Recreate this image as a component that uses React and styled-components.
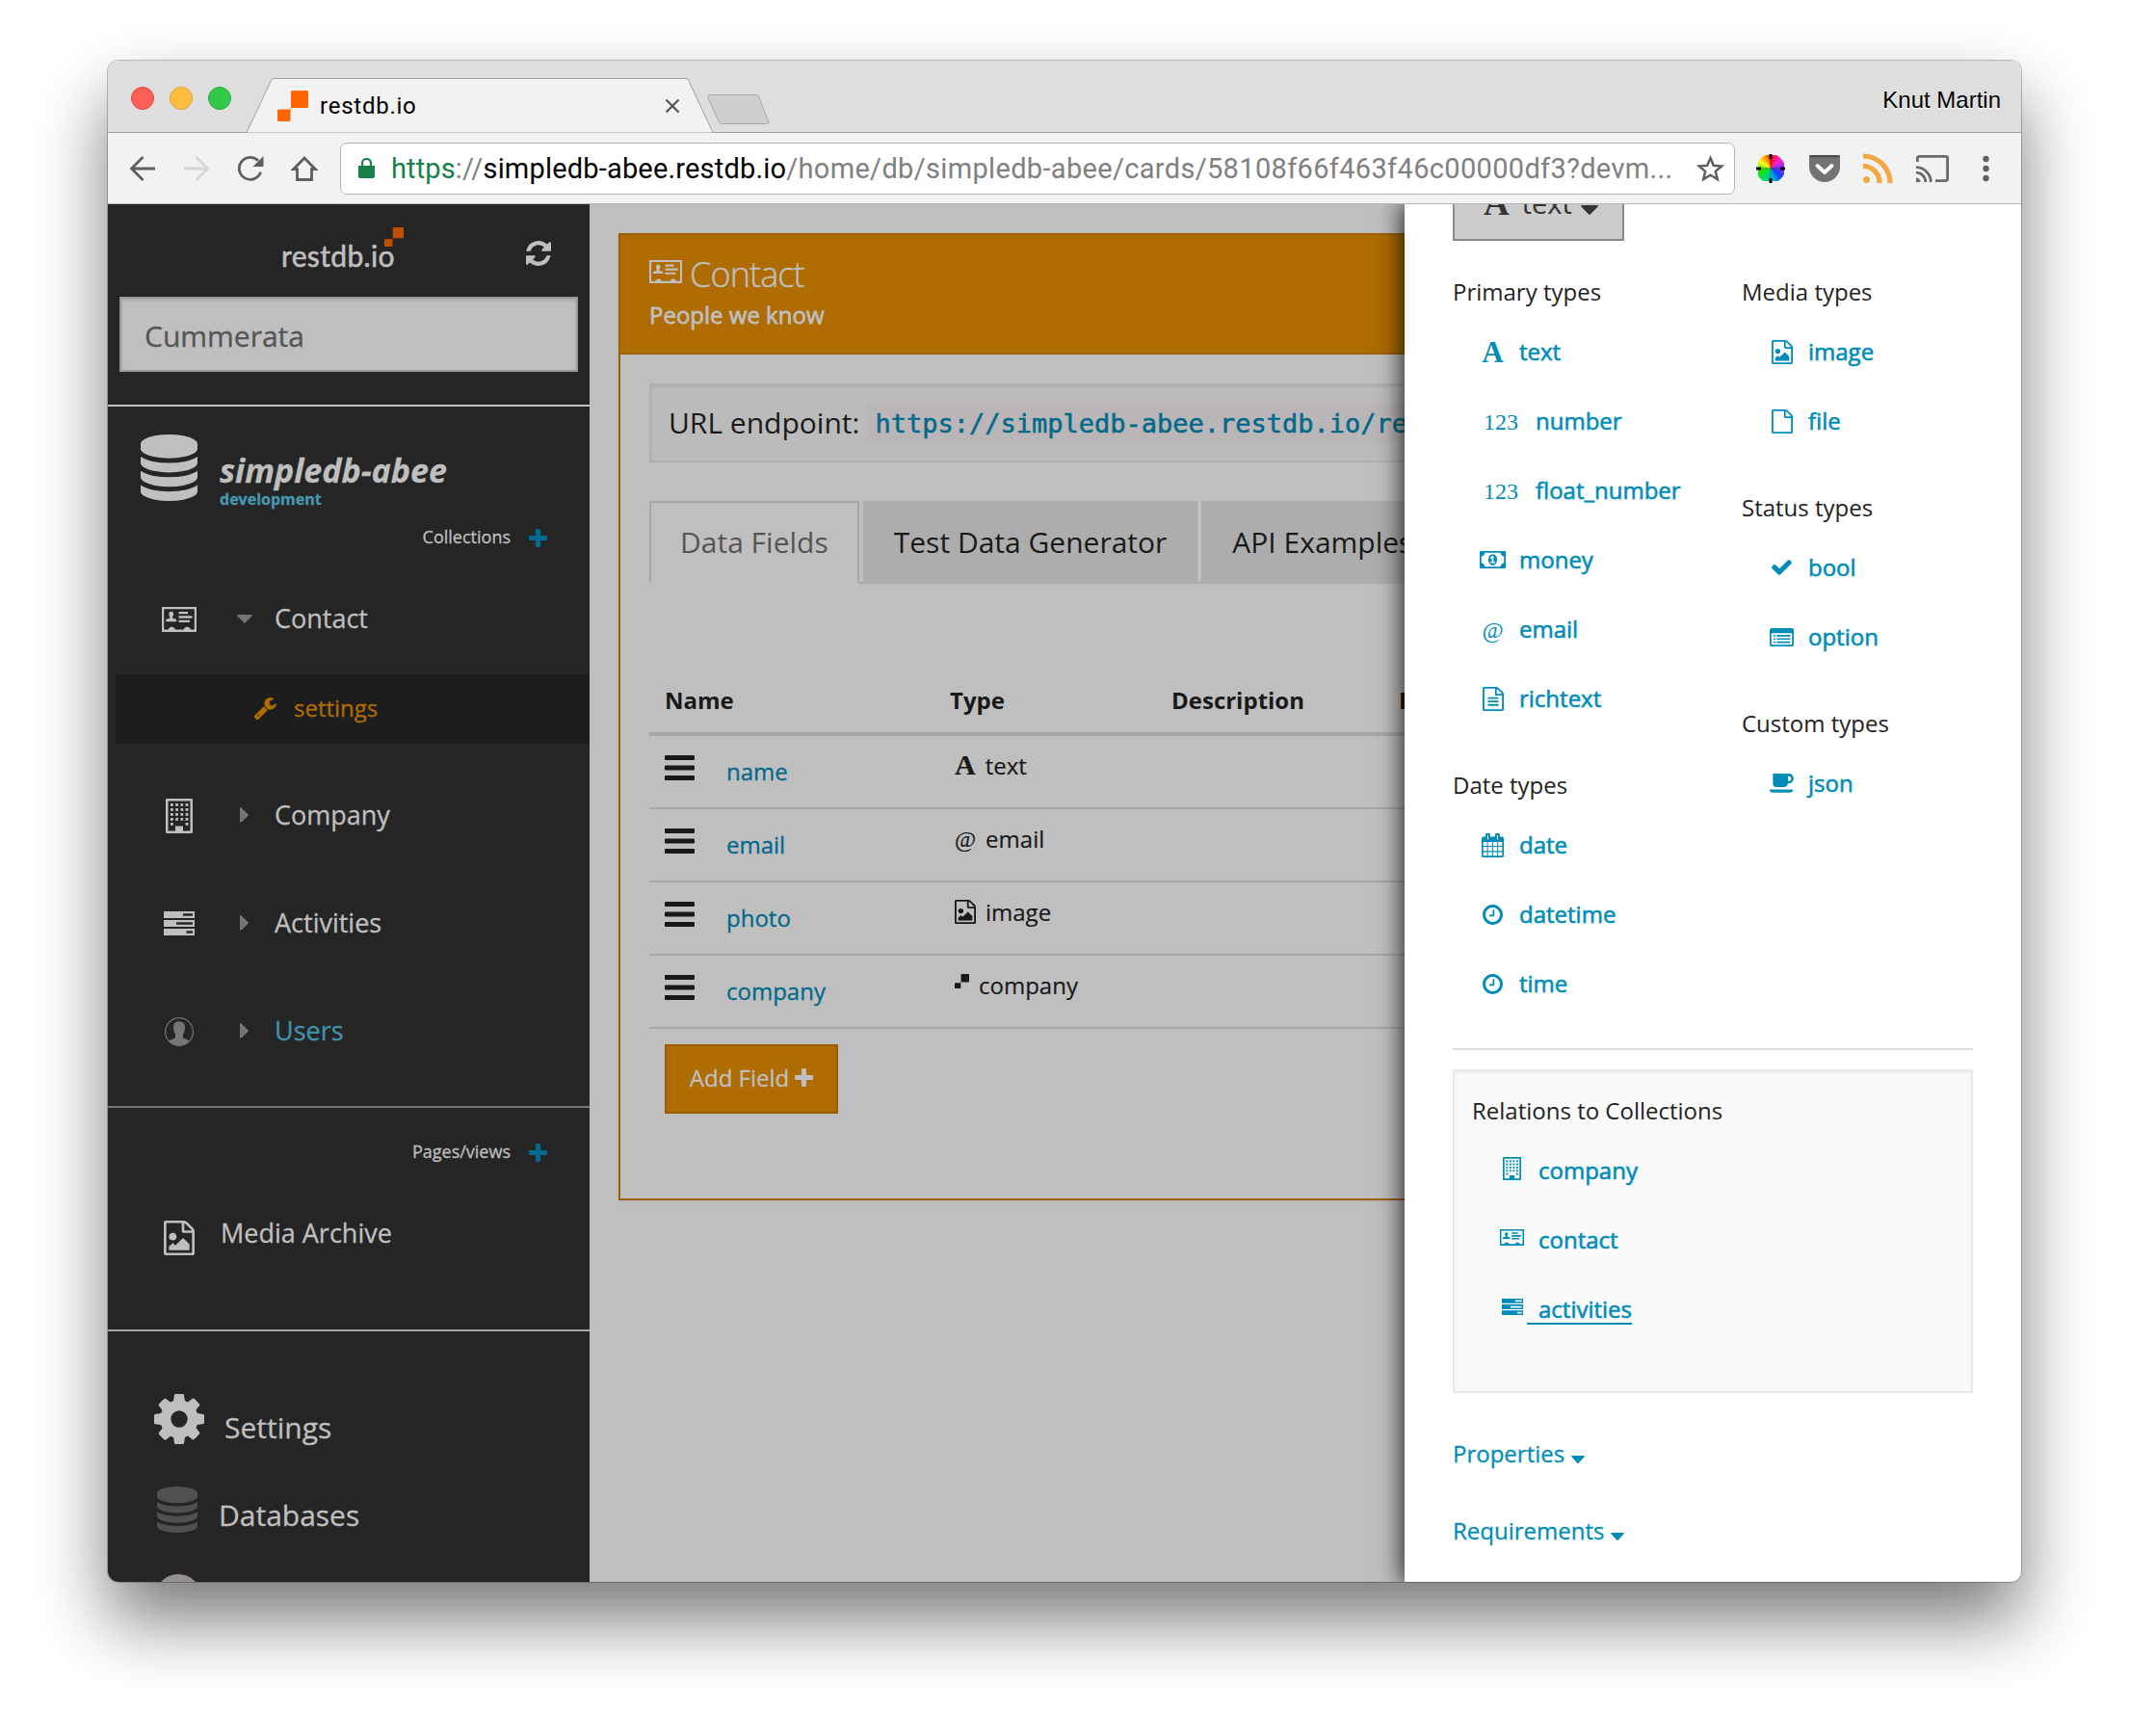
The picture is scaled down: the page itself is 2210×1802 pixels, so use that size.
import styled, { createGlobalStyle, css } from "styled-components";

const LINK = "#008cba";
const LINK_DIM = "#00698c";
const DIM = "#bfbfbf";
const ORANGE = "#ae6c02";
const ORANGE_DARK = "#9c6002";

const GlobalStyle = createGlobalStyle`
  * {
    box-sizing: border-box;
  }

  body {
    margin: 0;
    background-color: #fff;
    font-family: "Open Sans", sans-serif;
    color: #222;
  }

  p, h1, h2, h3, h4, ul, table {
    margin: 0;
    padding: 0;
    font-weight: 400;
  }

  a {
    text-decoration: none;
    color: inherit;
  }
`;

/* ---------- icons ---------- */

const FILE_PATH =
  "M1596 380q28 28 48 76t20 88v1152q0 40-28 68t-68 28H224q-40 0-68-28t-28-68V96q0-40 28-68T224 0h896q40 0 88 20t76 48zm-444-244v376h376q-10-29-22-41l-313-313q-12-12-41-22zm384 1528V640h-416q-40 0-68-28t-28-68V128H256v1536h1280z";

const icons = {
  file: { box: "128 0 1536 1792", body: <path d={FILE_PATH} /> },
  image: {
    box: "128 0 1536 1792",
    body: (
      <>
        <path d={FILE_PATH} />
        <path d="M1408 1216v320H384v-192l192-192 128 128 384-384zM576 1024q-80 0-136-56t-56-136 56-136 136-56 136 56 56 136-56 136-136 56z" />
      </>
    ),
  },
  richtext: {
    box: "128 0 1536 1792",
    body: (
      <>
        <path d={FILE_PATH} />
        <rect x="512" y="768" width="768" height="128" rx="32" />
        <rect x="512" y="1024" width="768" height="128" rx="32" />
        <rect x="512" y="1280" width="768" height="128" rx="32" />
      </>
    ),
  },
  database: {
    box: "128 0 1536 1792",
    body: (
      <path d="M896 768q237 0 443-43t325-127v170q0 69-103 128t-280 93.5-385 34.5-385-34.5T231 896 128 768V598q119 84 325 127t443 43zm0 768q237 0 443-43t325-127v170q0 69-103 128t-280 93.5-385 34.5-385-34.5-280-93.5-103-128v-170q119 84 325 127t443 43zm0-384q237 0 443-43t325-127v170q0 69-103 128t-280 93.5-385 34.5-385-34.5-280-93.5-103-128V982q119 84 325 127t443 43zM896 0q208 0 385 34.5t280 93.5 103 128v128q0 69-103 128t-280 93.5T896 640t-385-34.5T231 512 128 384V256q0-69 103-128t280-93.5T896 0z" />
    ),
  },
  plus: {
    box: "192 128 1408 1408",
    body: (
      <path d="M1600 736v192q0 40-28 68t-68 28h-416v416q0 40-28 68t-68 28h-192q-40 0-68-28t-28-68v-416h-416q-40 0-68-28t-28-68v-192q0-40 28-68t68-28h416v-416q0-40 28-68t68-28h192q40 0 68 28t28 68v416h416q40 0 68 28t28 68z" />
    ),
  },
  wrench: {
    box: "85 128 1641 1643",
    body: (
      <path d="M448 1472q0-26-19-45t-45-19-45 19-19 45 19 45 45 19 45-19 19-45zm644-420l-682 682q-37 37-90 37-52 0-91-37L123 1627q-38-36-38-90 0-53 38-91l681-681q39 98 114.5 173.5T1092 1052zm634-435q0 39-23 106-47 134-164.5 217.5T1280 1024q-185 0-316.5-131.5T832 576t131.5-316.5T1280 128q58 0 121.5 16.5T1509 191q16 11 16 28t-16 28l-293 169v224l193 107q5-3 79-48.5t135.5-81T1694 582q15 0 23.5 10t8.5 25z" />
    ),
  },
  cog: {
    box: "128 128 1536 1536",
    body: (
      <path d="M1152 896q0-106-75-181t-181-75-181 75-75 181 75 181 181 75 181-75 75-181zm512-109v222q0 12-8 23t-20 13l-185 28q-19 54-39 91 35 50 107 138 10 12 10 25t-9 23q-27 37-99 108t-94 71q-12 0-26-9l-138-108q-44 23-91 38-16 136-29 186-7 28-36 28H785q-14 0-24.5-8.5T749 1642l-28-184q-49-16-90-37l-141 107q-10 9-25 9-14 0-25-11-126-114-165-168-7-10-7-23 0-12 8-23 15-21 51-66.5t54-70.5q-27-50-41-99l-183-27q-13-2-21-12.5t-8-23.5V785q0-12 8-23t19-13l186-28q14-46 39-92-40-57-107-138-10-12-10-24 0-10 9-23 26-36 98.5-107.5T465 263q13 0 26 10l138 107q44-23 91-38 16-136 29-186 7-28 36-28h222q14 0 24.5 8.5T1043 156l28 184q49 16 90 37l142-107q9-9 24-9 13 0 25 10 129 119 165 170 7 8 7 22 0 12-8 23-15 21-51 66.5t-54 70.5q26 50 41 98l183 28q13 2 21 12.5t8 23.5z" />
    ),
  },
  refresh: {
    box: "128 128 1536 1536",
    body: (
      <path d="M1639 1056q0 5-1 7-64 268-268 434.5T892 1664q-146 0-282.5-55T366 1452l-129 129q-19 19-45 19t-45-19-19-45v-448q0-26 19-45t45-19h448q26 0 45 19t19 45-19 45l-137 137q71 66 161 102t187 36q134 0 250-65t186-179q11-17 53-117 8-23 30-23h192q13 0 22.5 9.5t9.5 22.5zm25-800v448q0 26-19 45t-45 19h-448q-26 0-45-19t-19-45 19-45l138-138Q1097 384 896 384q-134 0-250 65T460 628q-11 17-53 117-8 23-30 23H178q-13 0-22.5-9.5T146 736v-7q65-268 270-434.5T896 128q146 0 284 55.5T1425 340l130-129q19-19 45-19t45 19 19 45z" />
    ),
  },
  money: {
    box: "0 256 1920 1280",
    body: (
      <path d="M768 1152h384v-96h-128V608H910L762 745l77 80q42-37 55-57h2v288H768v96zm512-256q0 70-21 142t-59.5 134-101.5 101-138 39-138-39-101.5-101-59.5-134-21-142 21-142 59.5-134T822 519t138-39 138 39 101.5 101 59.5 134 21 142zm512 256V640q-106 0-181-75t-75-181H384q0 106-75 181t-181 75v512q106 0 181 75t75 181h1152q0-106 75-181t181-75zm128-832v1152q0 26-19 45t-45 19H64q-26 0-45-19t-19-45V320q0-26 19-45t45-19h1792q26 0 45 19t19 45z" />
    ),
  },
  check: {
    box: "121 334 1550 1188",
    body: (
      <path d="M1671 566q0 40-28 68l-724 724-136 136q-28 28-68 28t-68-28l-136-136-362-362q-28-28-28-68t28-68l136-136q28-28 68-28t68 28l294 295 656-657q28-28 68-28t68 28l136 136q28 28 28 68z" />
    ),
  },
  clock: {
    box: "128 128 1536 1536",
    body: (
      <path d="M1024 544v448q0 14-9 23t-23 9H672q-14 0-23-9t-9-23v-64q0-14 9-23t23-9h224V544q0-14 9-23t23-9h64q14 0 23 9t9 23zm416 352q0-148-73-273t-198-198-273-73-273 73-198 198-73 273 73 273 198 198 273 73 273-73 198-198 73-273zm224 0q0 209-103 385.5T1281.5 1561 896 1664t-385.5-103T231 1281.5 128 896t103-385.5T510.5 231 896 128t385.5 103T1561 510.5 1664 896z" />
    ),
  },
  card: {
    box: "0 0 36 26",
    body: (
      <>
        <path
          fillRule="evenodd"
          d="M0 0h36v26H0zM2.200 2.200v21.300h4.600a3.600 3.600 0 0 1 7 0h9a3.600 3.600 0 0 1 7 0h4V2.200z"
        />
        <path d="M9.700 4.800c1.700 0 2.400 1.200 2.400 2.700 0 1.300-.7 2.300-1 2.900v1.400l3 .7c.8.300 1.200 1 1.200 2.700H4.100c0-1.700.4-2.400 1.200-2.700l3-.7v-1.400c-.3-.6-1-1.600-1-2.900 0-1.500.7-2.700 2.400-2.700z" />
        <path d="M17.500 5h9.500v2.300h-9.500zM17.500 9.300h14v2.400h-14zM17.500 13.700h11.500v2.300h-11.500z" />
      </>
    ),
  },
  building: {
    box: "0 0 28 36",
    body: (
      <>
        <path
          fillRule="evenodd"
          d="M1.200 0h25.600Q28 0 28 1.200v33.600Q28 36 26.800 36H1.200Q0 36 0 34.800V1.200Q0 0 1.200 0zM2.500 2.500v31H10V28.500h8v5h7.500v-31z"
        />
        {[5, 10, 15, 20, 25].map((y) =>
          [5, 10.2, 15.4, 20.6].map((x) =>
            y === 25 && x > 6 && x < 20 ? null : (
              <rect key={`${x}-${y}`} x={x} y={y} width="2.8" height="2.8" />
            ),
          ),
        )}
      </>
    ),
  },
  tasks: {
    box: "0 0 32 25",
    body: (
      <path
        fillRule="evenodd"
        d="M0 0h32v7H0zM20 2.300v2.500h10V2.300zM0 9h32v7H0zM13 11.300v2.500h17v-2.500zM0 18h32v7H0zM23.500 20.300v2.500H30v-2.500z"
      />
    ),
  },
  user: {
    box: "0 0 30 30",
    body: (
      <>
        <circle cx="15" cy="15" r="14.400" fill="none" stroke="currentColor" strokeWidth="1.200" />
        <path d="M15 4.200c4 0 6 2.300 6 6.300 0 3.500-1.200 5.800-2 7v3.700c1.500 1.300 5 1.500 6.800 3.300A14.600 14.600 0 0 1 15 29.500 14.600 14.600 0 0 1 4.200 24.500c1.800-1.800 5.300-2 6.800-3.300v-3.700c-.8-1.200-2-3.500-2-7 0-4 2-6.300 6-6.300z" />
      </>
    ),
  },
  list: {
    box: "0 0 24 19",
    body: (
      <>
        <path fillRule="evenodd" d="M2 0h20q2 0 2 2v15q0 2-2 2H2q-2 0-2-2V2q0-2 2-2zM1.700 5.300V16q0 1.300 1 1.300h18.600q1 0 1-1.300V5.300z" />
        <path d="M4 7h1.700v1.700H4zM7 7h13.500v1.700H7zM4 10.400h1.700v1.700H4zM7 10.400h13.500v1.700H7zM4 13.800h1.700v1.700H4zM7 13.800h13.500v1.700H7z" />
      </>
    ),
  },
  coffee: {
    box: "0 0 25 20",
    body: (
      <path
        fillRule="evenodd"
        d="M3.400 0h16.400a5 5 0 0 1 0 10.200h-1a3.500 3.500 0 0 1-3.500 3.800H6.900a3.500 3.500 0 0 1-3.500-3.500zM19 2.700v5h.8a2.500 2.500 0 0 0 0-5zM0 16.500h24.200q0 3.200-3.400 3.200H3.400Q0 19.700 0 16.500z"
      />
    ),
  },
  calendar: {
    box: "0 0 23 24",
    body: (
      <path
        fillRule="evenodd"
        d="M1.800 3.400H4V2a2 2 0 0 1 5 0v1.400h5V2a2 2 0 0 1 5 0v1.400h2.200q1.800 0 1.800 1.800v17q0 1.800-1.800 1.800H1.800Q0 24 0 22.200v-17q0-1.800 1.800-1.800zM5.900 2v4.200h1.200V2zM15.900 2v4.200h1.200V2zM1.700 8.600v3.800h3.900V8.600zM6.600 8.600v3.800h4.300V8.600zM11.900 8.600v3.800h4.300V8.600zM17.200 8.600v3.800h4.100V8.600zM1.700 13.400v4.200h3.900v-4.200zM6.600 13.400v4.200h4.300v-4.200zM11.900 13.400v4.200h4.300v-4.200zM17.200 13.400v4.200h4.100v-4.200zM1.700 18.600v3.700h3.900v-3.700zM6.600 18.600v3.700h4.300v-3.700zM11.900 18.600v3.700h4.300v-3.700zM17.200 18.600v3.700h4.100v-3.700z"
      />
    ),
  },
  bars: {
    box: "0 0 31 26",
    body: (
      <>
        <rect width="31" height="5" rx="1" />
        <rect y="10.500" width="31" height="5" rx="1" />
        <rect y="21" width="31" height="5" rx="1" />
      </>
    ),
  },
  caretDown: { box: "0 0 16 9", body: <path d="M1 0h14q1.500.4.5 1.500L8.700 8.600q-.7.600-1.400 0L.5 1.500Q-.5.400 1 0z" /> },
  caretRight: { box: "0 0 9 16", body: <path d="M0 1v14q.4 1.500 1.500.5l7.100-6.800q.6-.7 0-1.400L1.500.5Q.4-.5 0 1z" /> },
  squares: {
    box: "0 0 32 32",
    body: (
      <path d="M15.500 0h15q1.500 0 1.500 1.500v15q0 1.500-1.500 1.500H16q-1.500 0-2.500 1.200v11.300q0 1.500-1.500 1.500H1.500Q0 32 0 30.500V21q0-1.500 1.500-1.500H12q2 0 2-2v-16Q14 0 15.500 0z" />
    ),
  },
};

const Svg = styled.svg`
  display: block;
  flex: none;
  fill: currentColor;
`;

const Icon = ({ name, w, h = w, className }) => (
  <Svg
    className={className}
    viewBox={icons[name].box}
    width={w}
    height={h}
    preserveAspectRatio="none"
  >
    {icons[name].body}
  </Svg>
);

/* ---------- browser window ---------- */

const Desktop = styled.div`
  width: 2210px;
  height: 1802px;
  padding: 63px 112px 0;
  overflow: hidden;
`;

const Window = styled.div`
  width: 1986px;
  height: 1579px;
  border-radius: 11px;
  overflow: hidden;
  display: flex;
  flex-direction: column;
  background-color: #f2f2f2;
`;

const Shadow = styled.div`
  border-radius: 11px;
  box-shadow:
    0 0 0 1px rgba(0, 0, 0, 0.24),
    0 40px 74px rgba(0, 0, 0, 0.52);
`;

const TabStrip = styled.div`
  height: 75px;
  flex: none;
  display: flex;
  align-items: flex-end;
  background-color: #dedede;
  box-shadow: inset 0 -1px 0 #9f9f9f;
`;

const Lights = styled.div`
  display: flex;
  align-self: center;
  gap: 16px;
  padding: 3px 0 0 24px;
  width: 144px;
`;

const Light = styled.span`
  width: 24px;
  height: 24px;
  border-radius: 50%;
  background-color: ${({ $color }) => $color};
  border: 1px solid ${({ $edge }) => $edge};
`;

const BrowserTab = styled.div`
  position: relative;
  width: 484px;
  height: 57px;
  display: flex;
  align-items: center;
  padding: 0 34px 0 32px;
  font-family: Roboto, sans-serif;
  font-size: 24px;
  letter-spacing: 0.75px;
  color: #000;

  .shape {
    position: absolute;
    left: 0;
    top: 0;
  }

  .favicon {
    position: relative;
    color: #ff6600;
    margin-right: 12px;
  }

  p {
    position: relative;
    flex: 1;
  }

  .close {
    position: relative;
  }
`;

const NewTab = styled.svg`
  display: block;
  margin: 0 0 8px -7px;
`;

const Profile = styled.p`
  margin-left: auto;
  align-self: center;
  padding: 6px 21px 0 0;
  font-family: "Liberation Sans", sans-serif;
  font-size: 24px;
  color: #000;
  text-shadow: 0 1px 0 #fff;
`;

const Toolbar = styled.div`
  height: 74px;
  flex: none;
  display: flex;
  align-items: center;
  padding-left: 22px;
  border-bottom: 1px solid #b4b4b4;
`;

const NavButtons = styled.div`
  display: flex;
  gap: 28px;
  width: 219px;
`;

const UrlField = styled.div`
  width: 1448px;
  height: 54px;
  display: flex;
  align-items: center;
  padding: 0 10px 0 18px;
  background-color: #fff;
  border: 1px solid #b5b5b5;
  border-radius: 7px;
  font-family: Roboto, sans-serif;
  font-size: 29px;
  letter-spacing: 0.33px;
  color: #808080;
  white-space: nowrap;

  p {
    flex: 1;
    padding-left: 17px;
  }

  .secure {
    color: #188048;
    letter-spacing: 0.1px;
  }

  .host {
    color: #000;
    letter-spacing: 0.18px;
  }
`;

const Extensions = styled.div`
  display: flex;
  align-items: center;
  gap: 24px;
  padding-left: 22px;
`;

const ColorWheel = styled.span`
  width: 30px;
  height: 30px;
  margin-right: 1px;
  background: conic-gradient(
      #ff1010,
      #ff20d0 45deg,
      #7030ff 95deg,
      #1040ff 130deg,
      #00b0e0 170deg,
      #00e060 215deg,
      #20e000 255deg,
      #ffff20 300deg,
      #ff9000 335deg,
      #ff1010
    )
    center / 27px 27px no-repeat;
  border-radius: 50%;

  svg {
    display: block;
  }
`;

const BrowserChrome = () => (
  <>
    <TabStrip>
      <Lights>
        <Light $color="#ff5f57" $edge="#e0443e" />
        <Light $color="#ffbd3f" $edge="#dea034" />
        <Light $color="#34c84a" $edge="#2aad3c" />
      </Lights>
      <BrowserTab>
        <svg className="shape" width="484" height="57">
          <path d="M0 56.500L26 1.500Q26.500.5 28 .5H456Q458 .5 458.500 2L484 56.500" fill="#f2f2f2" stroke="#9f9f9f" />
        </svg>
        <Icon className="favicon" name="squares" w={32} />
        <p>restdb.io</p>
        <svg className="close" width="16" height="16" viewBox="0 0 16 16" stroke="#555" strokeWidth="2.200">
          <path d="M1.500 1.500l13 13M14.500 1.500l-13 13" />
        </svg>
      </BrowserTab>
      <NewTab width="67" height="33" viewBox="0 0 67 33">
        <path d="M4 1.500h47q3 0 4 2.500l9.500 25q.8 2.500-2 2.500H17q-3 0-4-2.500L2 4.500Q1 1.500 4 1.500z" fill="#cfcfcf" stroke="#a6a6a6" />
      </NewTab>
      <Profile>Knut Martin</Profile>
    </TabStrip>
    <Toolbar>
      <NavButtons>
        <svg width="28" height="28" viewBox="0 0 28 28" fill="none" stroke="#5f5f5f" strokeWidth="2.800">
          <path d="M27 14H3M14.500 2L2.500 14l12 12" />
        </svg>
        <svg width="28" height="28" viewBox="0 0 28 28" fill="none" stroke="#d6d6d6" strokeWidth="2.800">
          <path d="M1 14h24M13.500 2l12 12-12 12" />
        </svg>
        <svg width="28" height="28" viewBox="0 0 28 28" fill="none" stroke="#5f5f5f" strokeWidth="2.800">
          <path d="M24.600 17.800A11.500 11.500 0 1 1 22 5.700" />
          <path d="M27.500 1v11h-11z" fill="#5f5f5f" stroke="none" />
        </svg>
        <svg width="28" height="28" viewBox="0 0 28 28" fill="none" stroke="#5f5f5f" strokeWidth="2.800">
          <path d="M6.500 14.500H2.800L14 3l11.200 11.500h-3.700V25.500h-15z" />
        </svg>
      </NavButtons>
      <UrlField>
        <svg width="17" height="21" viewBox="0 0 17 21">
          <path d="M0 8h17v11q0 2-2 2H2q-2 0-2-2z" fill="#188048" />
          <path d="M4 9V5.500a4.500 4.500 0 0 1 9 0V9" fill="none" stroke="#188048" strokeWidth="2.200" />
        </svg>
        <p>
          <span className="secure">https</span>://
          <span className="host">simpledb-abee.restdb.io</span>
          /home/db/simpledb-abee/cards/58108f66f463f46c00000df3?devm...
        </p>
        <svg width="29" height="28" viewBox="0 0 29 28" fill="none" stroke="#5f5f5f" strokeWidth="2.500">
          <path d="M14.500 3l3.300 7.700 8.400.7-6.400 5.500 2 8.200-7.300-4.400-7.300 4.400 2-8.200L2.800 11.400l8.400-.7z" />
        </svg>
      </UrlField>
      <Extensions>
        <ColorWheel>
          <svg width="30" height="30" viewBox="0 0 30 30">
            <path d="M15 0v5M15 25v5M0 15h5M25 15h5" stroke="#000" strokeWidth="3" />
            <path d="M15 5v20M5 15h20" stroke="#000" strokeOpacity="0.4" strokeWidth="0.800" />
          </svg>
        </ColorWheel>
        <svg width="32" height="28" viewBox="0 0 32 28">
          <path d="M2 0h28Q32 0 32 2V12a16 16 0 0 1-32 0V2Q0 0 2 0z" fill="#737373" />
          <path d="M0 2.200Q0 0 2 0h28Q32 0 32 2.200z" fill="#4a4a4a" />
          <path d="M8.500 11l7.500 7 7.500-7" fill="none" stroke="#fff" strokeWidth="3.800" strokeLinecap="round" strokeLinejoin="round" />
        </svg>
        <svg width="31" height="31" viewBox="0 0 31 31" fill="none" stroke="#f2a941" strokeWidth="5.200">
          <circle cx="3.500" cy="27.500" r="3.500" fill="#f2a941" stroke="none" />
          <path d="M0 13.500A17 17 0 0 1 17 31M0 3A28 28 0 0 1 28 31" />
        </svg>
        <svg width="34" height="28" viewBox="0 0 34 28" fill="none" stroke="#6b6b6b" strokeWidth="2.800">
          <path d="M1.400 7V3.400q0-2 2-2h27.200q2 0 2 2v21.200q0 2-2 2H20M0 12.700A15.300 15.300 0 0 1 15.300 28M0 18.200A9.800 9.800 0 0 1 9.800 28" />
          <path d="M0 23.500A4.500 4.500 0 0 1 4.500 28H0z" fill="#6b6b6b" stroke="none" />
        </svg>
        <svg width="28" height="28" viewBox="0 0 28 28" fill="#5f5f5f">
          <circle cx="14.500" cy="4" r="3.200" />
          <circle cx="14.500" cy="14" r="3.200" />
          <circle cx="14.500" cy="24" r="3.200" />
        </svg>
      </Extensions>
    </Toolbar>
  </>
);

/* ---------- sidebar ---------- */

const Page = styled.div`
  position: relative;
  flex: 1;
  min-height: 0;
  display: flex;
  background-color: ${DIM};
  overflow: hidden;
`;

const SideBarContainer = styled.nav`
  width: 500px;
  flex: none;
  overflow: hidden;
  background-color: #252525;
  color: ${DIM};
  -webkit-text-stroke: 0.3px;
`;

const Brand = styled.div`
  height: 96px;
  display: flex;
  align-items: center;
  justify-content: space-between;
  padding: 6px 40px 0 180px;

  .name {
    position: relative;
    padding-top: 3px;
    font-family: Lato, sans-serif;
    font-size: 30px;
    letter-spacing: 0.35px;
    line-height: 34px;
    -webkit-text-stroke: 0.6px;
  }

  .mark {
    position: absolute;
    right: -9px;
    top: -9px;
    color: #c24e00;
  }
`;

const Search = styled.div`
  height: 78px;
  margin: 0 12px 34px;
  padding: 2px 24px 0;
  display: flex;
  align-items: center;
  background-color: ${DIM};
  border: 2px solid #989898;
  box-shadow: inset 0 2px 3px rgba(0, 0, 0, 0.12);
  font-size: 30px;
  color: #555;
`;

const Rule = styled.div`
  height: 2px;
  margin-top: ${({ $top }) => $top || 0}px;
  background-color: ${({ $color }) => $color};
`;

const DatabaseHead = styled.div`
  height: 116px;
  display: flex;
  gap: 23px;
  padding: 29px 0 0 34px;

  h2 {
    padding-top: 16px;
    font-size: 34px;
    font-weight: 700;
    font-style: italic;
    line-height: 43px;
  }

  p {
    font-size: 16px;
    font-weight: 700;
    line-height: 16px;
    color: #4798b0;
  }
`;

const SectionLabel = styled.div`
  height: 38px;
  margin-top: ${({ $top }) => $top}px;
  margin-bottom: 9px;
  padding-right: 44px;
  display: flex;
  align-items: center;
  justify-content: flex-end;
  gap: 19px;
  font-size: 18px;

  svg {
    color: #006b8f;
    margin-top: 2px;
  }
`;

const NavItem = styled.div`
  height: 112px;
  display: flex;
  align-items: center;
  padding-left: 44px;
  font-size: 27px;
  color: ${({ $color }) => $color || DIM};
`;

const MediaItem = styled(NavItem)`
  gap: 13px;
`;

const NavIcon = styled.span`
  width: 60px;
  display: flex;
  justify-content: center;
  padding-top: ${({ $drop }) => $drop || 3}px;
  color: ${({ $muted }) => ($muted ? "#757575" : DIM)};
`;

const NavCaret = styled.span`
  width: 28px;
  margin: 2px 17px 0 24px;
  padding-right: ${({ $closed }) => ($closed ? 2 : 1)}px;
  display: flex;
  justify-content: center;
  color: #757575;
`;

const SubItem = styled.div`
  height: 72px;
  margin: 3px 0 17px 8px;
  padding: 0 0 2px 144px;
  display: flex;
  align-items: center;
  gap: 18px;
  background-color: #1d1d1d;
  color: ${ORANGE};
  font-size: 24px;

  p {
    padding-bottom: 2px;
  }
`;

const FooterNav = styled.div`
  padding-top: 51px;
`;

const FooterItem = styled.div`
  height: 80px;
  margin-bottom: 14px;
  display: flex;
  align-items: center;
  padding-left: ${({ $left }) => $left}px;
  gap: ${({ $gap }) => $gap}px;
  font-size: 30px;

  p {
    padding-top: ${({ $drop }) => $drop}px;
  }
`;

const MutedIcon = styled(Icon)`
  color: #505050;
`;

const Avatar = styled.div`
  width: 48px;
  height: 48px;
  margin: 27px 0 0 49px;
  border-radius: 50%;
  background-color: #95908b;
`;

const collections = [
  { name: "Company", icon: "building", w: 28, h: 36 },
  { name: "Activities", icon: "tasks", w: 32, h: 25 },
  { name: "Users", icon: "user", w: 30, h: 30, color: "#4192ad", muted: true },
];

const SideBar = () => (
  <SideBarContainer>
    <Brand>
      <p className="name">
        restdb.io
        <Icon className="mark" name="squares" w={20} />
      </p>
      <Icon name="refresh" w={26} />
    </Brand>
    <Search>Cummerata</Search>
    <Rule $color={DIM} />
    <DatabaseHead>
      <Icon name="database" w={59} h={69} />
      <div>
        <h2>simpledb-abee</h2>
        <p>development</p>
      </div>
    </DatabaseHead>
    <SectionLabel $top={0}>
      Collections
      <Icon name="plus" w={19} />
    </SectionLabel>
    <NavItem>
      <NavIcon>
        <Icon name="card" w={36} h={26} />
      </NavIcon>
      <NavCaret>
        <Icon name="caretDown" w={16} h={9} />
      </NavCaret>
      Contact
    </NavItem>
    <SubItem>
      <Icon name="wrench" w={23} />
      <p>settings</p>
    </SubItem>
    {collections.map((item) => (
      <NavItem key={item.name} $color={item.color}>
        <NavIcon $muted={item.muted}>
          <Icon name={item.icon} w={item.w} h={item.h} />
        </NavIcon>
        <NavCaret $closed>
          <Icon name="caretRight" w={9} h={16} />
        </NavCaret>
        {item.name}
      </NavItem>
    ))}
    <Rule $color="#777" $top={23} />
    <SectionLabel $top={26}>
      Pages/views
      <Icon name="plus" w={19} />
    </SectionLabel>
    <MediaItem>
      <NavIcon $drop={12}>
        <Icon name="image" w={32} h={36} />
      </NavIcon>
      Media Archive
    </MediaItem>
    <Rule $color="#a3a3a3" $top={45} />
    <FooterNav>
      <FooterItem $left={48} $gap={21} $drop={17}>
        <Icon name="cog" w={52} />
        <p>Settings</p>
      </FooterItem>
      <FooterItem $left={51} $gap={22} $drop={10}>
        <MutedIcon name="database" w={42} h={48} />
        <p>Databases</p>
      </FooterItem>
      <Avatar />
    </FooterNav>
  </SideBarContainer>
);

/* ---------- collection panel ---------- */

const Main = styled.main`
  flex: 1;
  min-width: 0;
  padding: 30px 30px 0;
`;

const Panel = styled.section`
  height: 1004px;
  border: 2px solid ${ORANGE_DARK};
  box-shadow: 0 2px 3px rgba(0, 0, 0, 0.05);
`;

const PanelHeader = styled.header`
  height: 124px;
  padding: 15px 30px 0;
  background-color: ${ORANGE};
  border-bottom: 2px solid ${ORANGE_DARK};
  color: ${DIM};

  h1 {
    display: flex;
    gap: 8px;
    font-size: 36px;
    font-weight: 300;
    letter-spacing: -0.9px;
    line-height: 52px;
    -webkit-text-stroke: 0.4px;
  }

  svg {
    margin-top: 11px;
  }

  p {
    font-size: 24px;
    line-height: 32px;
    -webkit-text-stroke: 0.8px;
  }
`;

const PanelBody = styled.div`
  padding: 30px 30px 0;
`;

const Endpoint = styled.div`
  height: 82px;
  display: flex;
  align-items: center;
  gap: 7px;
  padding: 0 0 2px 18px;
  background-color: #bbb;
  border: 2px solid #aeaeae;
  box-shadow: inset 0 2px 3px rgba(0, 0, 0, 0.05);
  font-size: 30px;
  color: #191919;
  white-space: nowrap;

  code {
    height: 40px;
    margin-top: 2px;
    padding: 0 9px;
    background-color: #bab5b6;
    font-family: "DejaVu Sans Mono", monospace;
    font-size: 27px;
    line-height: 41px;
    color: ${LINK_DIM};
    -webkit-text-stroke: 0.5px;
  }
`;

const Tabs = styled.div`
  display: flex;
  gap: 4px;
  height: 86px;
  margin-top: 40px;
  background: linear-gradient(#a6a6a6, #a6a6a6) 218px 100% / 100% 2px no-repeat;
`;

const Tab = styled.div`
  height: 86px;
  padding: 0 30px 1px;
  display: flex;
  align-items: center;
  border: 2px solid #adadad;
  background-color: #adadad;
  font-size: 30px;
  color: #191919;
  white-space: nowrap;

  ${({ $active }) =>
    $active &&
    css`
      background-color: ${DIM};
      border-color: #a6a6a6;
      border-bottom-color: ${DIM};
      color: #555;
    `}
`;

const FieldTable = styled.div`
  margin-top: 68px;
  font-size: 24px;
  color: #191919;
`;

const TableRow = styled.div`
  height: 76px;
  display: grid;
  grid-template-columns: 64px 232px 231px 237px 1fr;
  padding-left: 16px;
  border-bottom: 2px solid #a6a6a6;
`;

const TableHead = styled(TableRow)`
  height: 90px;
  grid-template-columns: 296px 230px 236px 1fr;
  align-items: center;
  padding-top: 25px;
  padding-bottom: 7px;
  border-bottom-width: 4px;
  font-weight: 700;
`;

const Handle = styled(Icon)`
  margin-top: 20px;
`;

const FieldName = styled.a`
  padding-top: 19px;
  line-height: 36px;
  color: ${LINK_DIM};
  -webkit-text-stroke: 0.3px;
`;

const FieldType = styled.p`
  display: flex;
  align-items: center;
  height: 36px;
  margin-top: 12px;
  padding-left: 5px;
  gap: 10px;
  -webkit-text-stroke: 0.2px;
`;

const Letter = styled.span`
  font-family: "Liberation Serif", serif;
  font-size: ${({ $size }) => $size || 24}px;
  font-weight: ${({ $bold }) => ($bold ? 700 : 400)};
  line-height: 1;
  padding-top: ${({ $drop }) => $drop || 0}px;
`;

const CompanyMark = styled(Icon)`
  margin-bottom: 7px;
`;

const AddButton = styled.button`
  height: 72px;
  width: 180px;
  margin: 16px 0 0 16px;
  padding: 0 0 3px;
  display: flex;
  align-items: center;
  justify-content: center;
  gap: 6px;
  background-color: ${ORANGE};
  border: 2px solid ${ORANGE_DARK};
  font-family: inherit;
  font-size: 24px;
  color: ${DIM};
  -webkit-text-stroke: 0.3px;
`;

const fields = [
  { name: "name", type: "text", icon: <Letter $bold $size={30}>A</Letter> },
  { name: "email", type: "email", icon: <Letter $drop={1}>@</Letter> },
  { name: "photo", type: "image", icon: <Icon name="image" w={22} h={25} /> },
  { name: "company", type: "company", icon: <CompanyMark name="squares" w={15} /> },
];

const Collection = () => (
  <Main>
    <Panel>
      <PanelHeader>
        <h1>
          <Icon name="card" w={34} h={24} />
          Contact
        </h1>
        <p>People we know</p>
      </PanelHeader>
      <PanelBody>
        <Endpoint>
          URL endpoint:
          <code>https://simpledb-abee.restdb.io/rest</code>
        </Endpoint>
        <Tabs>
          <Tab $active>Data Fields</Tab>
          <Tab>Test Data Generator</Tab>
          <Tab>API Examples</Tab>
        </Tabs>
        <FieldTable>
          <TableHead>
            <span>Name</span>
            <span>Type</span>
            <span>Description</span>
            <span>Required</span>
          </TableHead>
          {fields.map((field) => (
            <TableRow key={field.name}>
              <Handle name="bars" w={31} h={26} />
              <FieldName>{field.name}</FieldName>
              <FieldType>
                {field.icon}
                {field.type}
              </FieldType>
            </TableRow>
          ))}
        </FieldTable>
        <AddButton>
          Add Field
          <Icon name="plus" w={19} />
        </AddButton>
      </PanelBody>
    </Panel>
  </Main>
);

/* ---------- type drawer ---------- */

const DrawerContainer = styled.aside`
  position: absolute;
  top: 0;
  right: 0;
  bottom: 0;
  width: 640px;
  padding: 0 50px;
  background-color: #fff;
  box-shadow: 0 0 24px 2px rgba(0, 0, 0, 0.85);
  font-size: 24px;
`;

const TypeButton = styled.div`
  width: 178px;
  height: 79px;
  margin-top: -41px;
  display: flex;
  align-items: center;
  padding-left: 30px;
  background-color: #ccc;
  border: 2px solid #8a8a8a;
  font-size: 29px;
  color: #333;

  span {
    margin-right: 13px;
  }

  svg {
    margin: 14px 0 0 9px;
  }
`;

const Columns = styled.div`
  display: grid;
  grid-template-columns: 300px 1fr;
  margin-top: 36px;
`;

const Group = styled.div`
  margin-bottom: 37px;

  &:last-child {
    margin-bottom: 31px;
  }

  h3 {
    margin-bottom: 9px;
    font-size: 24px;
    line-height: 34px;
  }
`;

const TypeLink = styled.a`
  height: 72px;
  display: flex;
  align-items: center;
  padding: 0 0 2px 26px;
  color: ${LINK};
  -webkit-text-stroke: 0.6px ${LINK};

  .icon {
    width: ${({ $wide }) => ($wide ? 36 : 31)}px;
    margin-left: ${({ $wide }) => ($wide ? 6 : 0)}px;
    margin-right: ${({ $wide }) => ($wide ? 18 : 12)}px;
    padding-top: 2px;
    display: flex;
    justify-content: center;
    -webkit-text-stroke: 0;
  }
`;

const RelationLink = styled(TypeLink)`
  padding-bottom: 0;

  .icon {
    width: 31px;
    margin-right: 0;
    padding-top: 0;
    padding-bottom: ${({ $lift }) => $lift}px;
  }

  .label {
    margin-top: 2px;
    padding-left: 12px;
    line-height: 28px;
    border-bottom: 2px solid ${({ $active }) => ($active ? LINK : "transparent")};
  }
`;

const Divider = styled.div`
  height: 2px;
  margin-bottom: 20px;
  background-color: #ddd;
`;

const Relations = styled.div`
  height: 336px;
  margin-bottom: 22px;
  padding: 24px 18px 0;
  background-color: #fafafa;
  border: 2px solid #e8e8e8;
  box-shadow: inset 0 2px 3px rgba(0, 0, 0, 0.05);
`;

const Expander = styled.a`
  height: 80px;
  display: flex;
  align-items: center;
  gap: 7px;
  color: ${LINK};
  -webkit-text-stroke: 0.3px;

  svg {
    margin-top: 13px;
  }
`;

const leftGroups = [
  {
    title: "Primary types",
    items: [
      { name: "text", icon: <Letter $bold $size={31}>A</Letter> },
      { name: "number", icon: <Letter $drop={2}>123</Letter>, wide: true },
      { name: "float_number", icon: <Letter $drop={2}>123</Letter>, wide: true },
      { name: "money", icon: <Icon name="money" w={27} h={18} /> },
      { name: "email", icon: <Letter $drop={2}>@</Letter> },
      { name: "richtext", icon: <Icon name="richtext" w={22} h={25} /> },
    ],
  },
  {
    title: "Date types",
    items: [
      { name: "date", icon: <Icon name="calendar" w={23} h={25} /> },
      { name: "datetime", icon: <Icon name="clock" w={21} /> },
      { name: "time", icon: <Icon name="clock" w={21} /> },
    ],
  },
];

const rightGroups = [
  {
    title: "Media types",
    items: [
      { name: "image", icon: <Icon name="image" w={22} h={25} /> },
      { name: "file", icon: <Icon name="file" w={22} h={25} /> },
    ],
  },
  {
    title: "Status types",
    items: [
      { name: "bool", icon: <Icon name="check" w={21} h={16} /> },
      { name: "option", icon: <Icon name="list" w={25} h={19} /> },
    ],
  },
  {
    title: "Custom types",
    items: [{ name: "json", icon: <Icon name="coffee" w={25} h={20} /> }],
  },
];

const relations = [
  { name: "company", icon: "building", w: 19, h: 24, lift: 5 },
  { name: "contact", icon: "card", w: 25, h: 17, lift: 5 },
  { name: "activities", icon: "tasks", w: 22, h: 17, lift: 5, active: true },
];

const Groups = ({ groups }) => (
  <div>
    {groups.map((group) => (
      <Group key={group.title}>
        <h3>{group.title}</h3>
        {group.items.map((item) => (
          <TypeLink key={item.name} $wide={item.wide}>
            <span className="icon">{item.icon}</span>
            {item.name}
          </TypeLink>
        ))}
      </Group>
    ))}
  </div>
);

const Drawer = () => (
  <DrawerContainer>
    <TypeButton>
      <Letter $bold $size={37}>A</Letter>
      text
      <Icon name="caretDown" w={18} h={10} />
    </TypeButton>
    <Columns>
      <Groups groups={leftGroups} />
      <Groups groups={rightGroups} />
    </Columns>
    <Divider />
    <Relations>
      <Group>
        <h3>Relations to Collections</h3>
        {relations.map((item) => (
          <RelationLink key={item.name} $lift={item.lift} $active={item.active}>
            <span className="icon">
              <Icon name={item.icon} w={item.w} h={item.h} />
            </span>
            <span className="label">{item.name}</span>
          </RelationLink>
        ))}
      </Group>
    </Relations>
    <Expander>
      Properties
      <Icon name="caretDown" w={14} h={8} />
    </Expander>
    <Expander>
      Requirements
      <Icon name="caretDown" w={14} h={8} />
    </Expander>
  </DrawerContainer>
);

const App = () => (
  <>
    <GlobalStyle />
    <Desktop>
      <Shadow>
        <Window>
          <BrowserChrome />
          <Page>
            <SideBar />
            <Collection />
            <Drawer />
          </Page>
        </Window>
      </Shadow>
    </Desktop>
  </>
);

export default App;
